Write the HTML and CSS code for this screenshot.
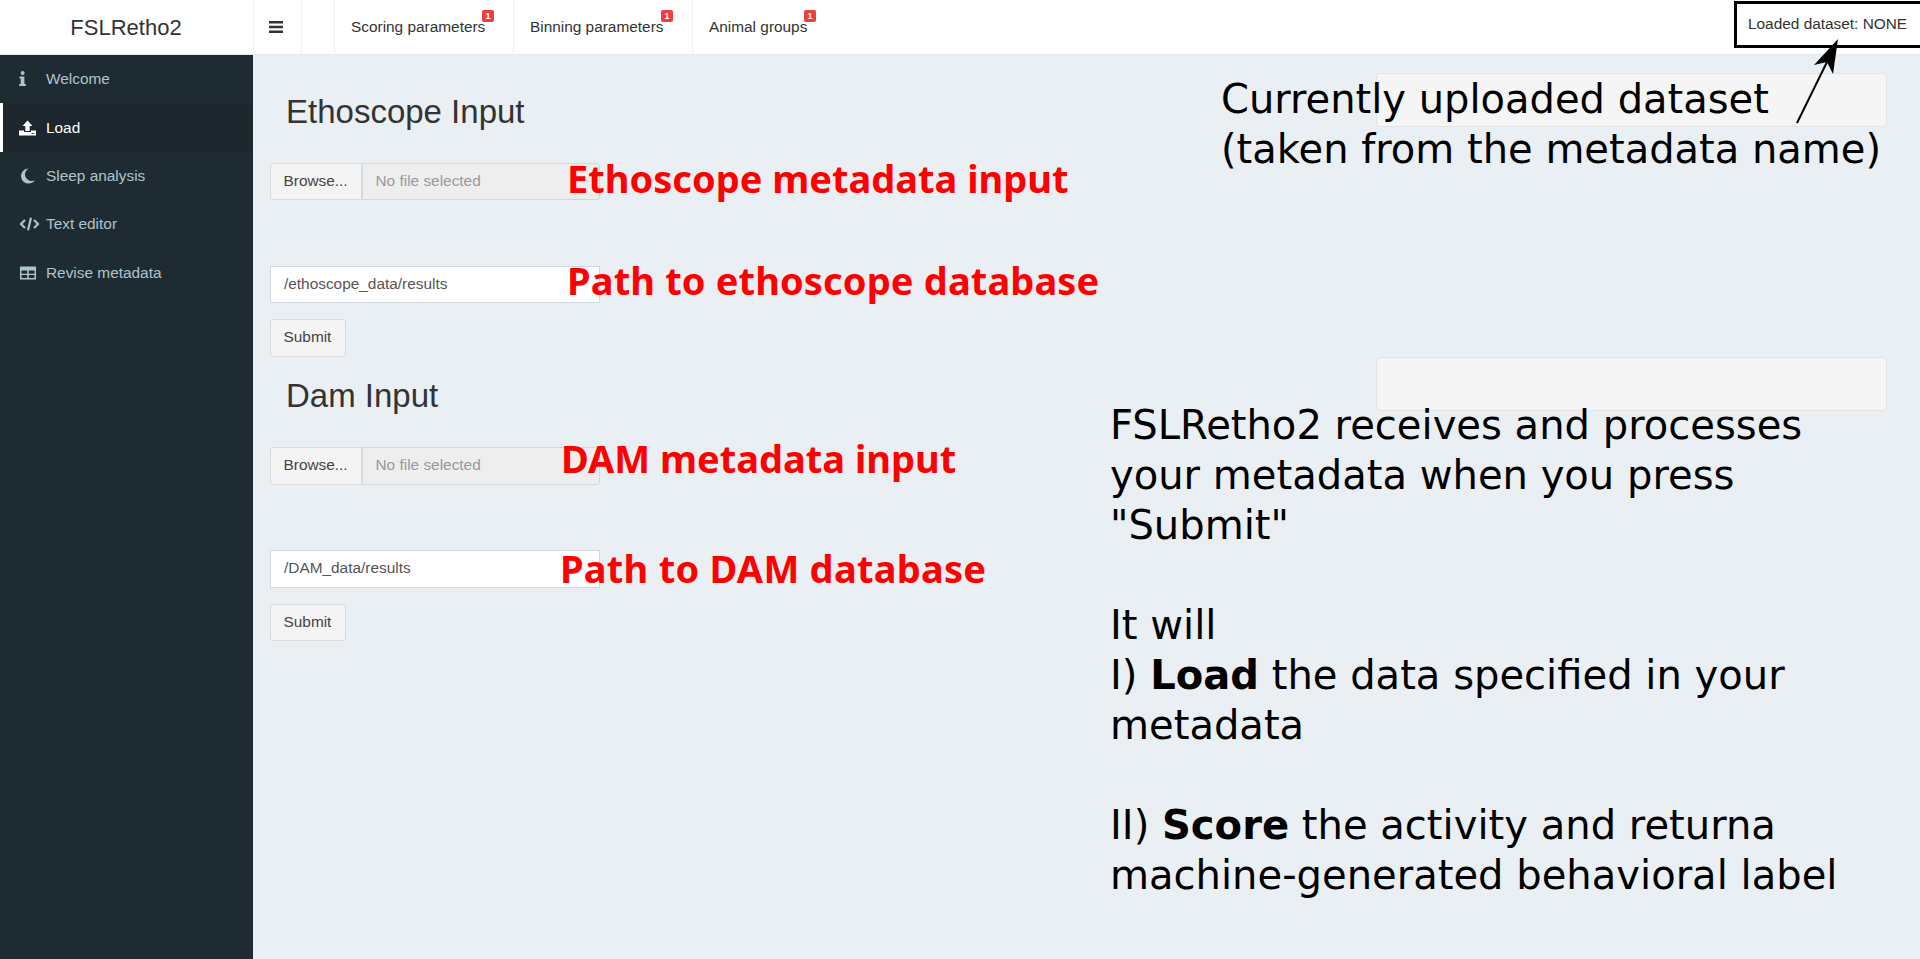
FILE: index.html
```html
<!DOCTYPE html>
<html lang="en">
<head>
    <meta charset="UTF-8">
    <meta name="viewport" content="width=device-width, initial-scale=1.0">
    <title>FSLRetho2</title>
    <link rel="stylesheet" href="styles.css">
</head>
<body>
    <header class="topbar">
        <div class="logo">FSLRetho2</div>
        <nav class="topnav">
            <a class="toggle">
                <svg class="bars" viewBox="0 0 14 12"><path d="M0 0h14v2.4H0zM0 4.800h14v2.400H0zM0 9.600h14V12H0z"/></svg>
            </a>
            <a class="blank"></a>
            <a class="tab">Scoring parameters<span class="badge">1</span></a>
            <a class="tab">Binning parameters<span class="badge">1</span></a>
            <a class="tab last">Animal groups<span class="badge">1</span></a>
        </nav>
        <div class="dataset">Loaded dataset: NONE</div>
    </header>

    <div class="page">
        <aside class="sidebar">
            <a class="item">
                <svg class="icon" viewBox="0 0 26 18"><circle cx="4.600" cy="3" r="2"/><path d="M1.500 6.500h4.900v7.500h1.400v2H1.200v-2h1.500V8.500H1.500z"/></svg>
                Welcome
            </a>
            <a class="item active">
                <svg class="icon" viewBox="0 0 26 18"><path fill-rule="evenodd" d="M9.500 1.500L14.500 7H11.700V12H7.300V7H4.500zM1 11.500H6V13H13V11.500H18V16.500H1zM13.500 14.200h3V15h-3z"/></svg>
                Load
            </a>
            <a class="item">
                <svg class="icon" viewBox="0 0 26 18"><path d="M10.500 1.600A7.500 7.500 0 1 0 16.800 13.200 6.600 6.600 0 0 1 10.500 1.600z"/></svg>
                Sleep analysis
            </a>
            <a class="item">
                <svg class="icon" viewBox="0 0 26 18"><path class="code" d="M7 5L3 9l4 4M16 5l4 4-4 4M13 2.800L10 15.200"/></svg>
                Text editor
            </a>
            <a class="item">
                <svg class="icon" viewBox="0 0 26 18"><path fill-rule="evenodd" d="M2 2.500h16v13H2zM3.500 6.500v3.300h5.700V6.500zM10.800 6.500v3.300h5.700V6.500zM3.500 11v3h5.700v-3zM10.800 11v3h5.700v-3z"/></svg>
                Revise metadata
            </a>
        </aside>

        <main class="content">
            <section class="row">
                <div class="inputs">
                    <h2>Ethoscope Input</h2>
                    <div class="file-group">
                        <span class="btn browse">Browse...</span>
                        <span class="file-name">No file selected</span>
                    </div>
                    <div class="text-input">/ethoscope_data/results</div>
                    <span class="btn submit">Submit</span>
                </div>
                <div class="well"></div>
            </section>
            <section class="row">
                <div class="inputs">
                    <h2>Dam Input</h2>
                    <div class="file-group">
                        <span class="btn browse">Browse...</span>
                        <span class="file-name">No file selected</span>
                    </div>
                    <div class="text-input">/DAM_data/results</div>
                    <span class="btn submit">Submit</span>
                </div>
                <div class="well"></div>
            </section>
        </main>
    </div>

    <!-- annotations drawn on top of the screenshot -->
    <div class="label label-1">Ethoscope metadata input</div>
    <div class="label label-2">Path to ethoscope database</div>
    <div class="label label-3">DAM metadata input</div>
    <div class="label label-4">Path to DAM database</div>

    <div class="note note-top">Currently uploaded dataset<br>(taken from the metadata name)</div>
    <div class="note note-main">FSLRetho2 receives and processes<br>your metadata when you press<br>"Submit"<br><br>It will<br>I) <b>Load</b> the data specified in your<br>metadata<br><br>II) <b>Score</b> the activity and returna<br>machine-generated behavioral label</div>

    <svg class="arrow" viewBox="0 0 60 100"><path d="M7 93L37 32" stroke="#000" stroke-width="2" fill="none"/><path d="M48 9L24 35 37 32 43 44z"/></svg>
</body>
</html>
```

FILE: styles.css
```css
* {
    box-sizing: border-box;
}

body {
    margin: 0;
    height: 959px;
    overflow: hidden;
    position: relative;
    background-color: #eaeff4;
    font-family: "Liberation Sans", Arial, sans-serif;
    font-size: 15.4px;
    color: #333;
}

.topbar {
    display: flex;
    height: 55px;
    background: white;
    border-bottom: 1px solid #e4e8ec;
}

.logo {
    width: 253px;
    padding-right: 1px;
    line-height: 55px;
    text-align: center;
    font-size: 22px;
    color: #333;
}

.topnav {
    display: flex;
    flex: 1;
}

.topnav a {
    display: flex;
    align-items: center;
    position: relative;
    height: 54px;
    border-left: 1px solid #eef0f2;
}

.toggle {
    width: 48px;
    padding-right: 4px;
    justify-content: center;
}

.bars {
    width: 14px;
    height: 12px;
    fill: #333;
}

.blank {
    width: 33px;
}

.tab {
    width: 179px;
    padding-left: 16px;
    color: #333;
}

.badge {
    position: absolute;
    top: 10px;
    left: 147px;
    width: 12px;
    height: 12px;
    border-radius: 2px;
    background: #f03d3d;
    color: white;
    font-size: 9px;
    font-weight: bold;
    line-height: 12px;
    text-align: center;
}

.tab.last .badge {
    left: 111px;
}

.dataset {
    width: 186px;
    height: 47px;
    margin-top: 1px;
    border: 3px solid #000;
    border-right: 0;
    padding-left: 11px;
    line-height: 40px;
    white-space: nowrap;
    color: #333;
}

.page {
    display: flex;
    height: 904px;
}

.sidebar {
    width: 253px;
    background-color: #1f2b32;
}

.item {
    display: flex;
    align-items: center;
    height: 48.4px;
    padding-left: 18px;
    color: #aec4cd;
}

.item.active {
    border-left: 3px solid white;
    padding-left: 15px;
    background-color: #1d282e;
    color: white;
}

.icon {
    width: 26px;
    height: 18px;
    margin-right: 2px;
    fill: currentColor;
}

.code {
    fill: none;
    stroke: currentColor;
    stroke-width: 2.200;
}

.content {
    flex: 1;
    padding: 18px 33px 0 16.500px;
}

.row {
    display: flex;
    justify-content: space-between;
    height: 284.3px;
}

.inputs {
    width: 330px;
}

h2 {
    margin: 21px 0 33px 16.500px;
    font-size: 33px;
    font-weight: 500;
    line-height: 36px;
    color: #333;
}

.file-group {
    display: flex;
    height: 37.400px;
    margin-bottom: 65.600px;
}

.btn {
    display: inline-block;
    height: 37.400px;
    padding: 0 13px;
    border: 1px solid #d8dcdf;
    border-radius: 3px;
    background-color: #f4f4f4;
    line-height: 34.500px;
    color: #444;
}

.browse {
    width: 92px;
    border-radius: 3px 0 0 3px;
}

.file-name {
    flex: 1;
    padding-left: 13px;
    border: 1px solid #d2d6de;
    border-radius: 0 3px 3px 0;
    background-color: #eee;
    line-height: 34px;
    color: #999;
}

.text-input {
    height: 37.400px;
    margin-bottom: 16px;
    padding-left: 13.500px;
    border: 1px solid #d2d6de;
    background: white;
    line-height: 34px;
    color: #555;
}

.submit {
    width: 76px;
}

.well {
    width: 511px;
    height: 54px;
    border: 1px solid #e3e3e3;
    border-radius: 4px;
    background-color: #f5f5f5;
}

.label {
    position: absolute;
    font-family: "Noto Sans", sans-serif;
    font-size: 38px;
    font-weight: bold;
    line-height: 50px;
    color: #f00;
    white-space: nowrap;
}

.label-1 { left: 567px; top: 153px; }
.label-2 { left: 567px; top: 255px; letter-spacing: 0.14px; }
.label-3 { left: 561px; top: 433px; }
.label-4 { left: 560px; top: 543px; letter-spacing: 0.25px; }

.note {
    position: absolute;
    font-family: "DejaVu Sans", sans-serif;
    font-size: 40px;
    line-height: 50px;
    color: #000;
    white-space: nowrap;
}

.note-top { left: 1221px; top: 74px; }
.note-main { left: 1110px; top: 400px; font-size: 40.070px; }

.arrow {
    position: absolute;
    left: 1790px;
    top: 30px;
    width: 60px;
    height: 100px;
}
```
